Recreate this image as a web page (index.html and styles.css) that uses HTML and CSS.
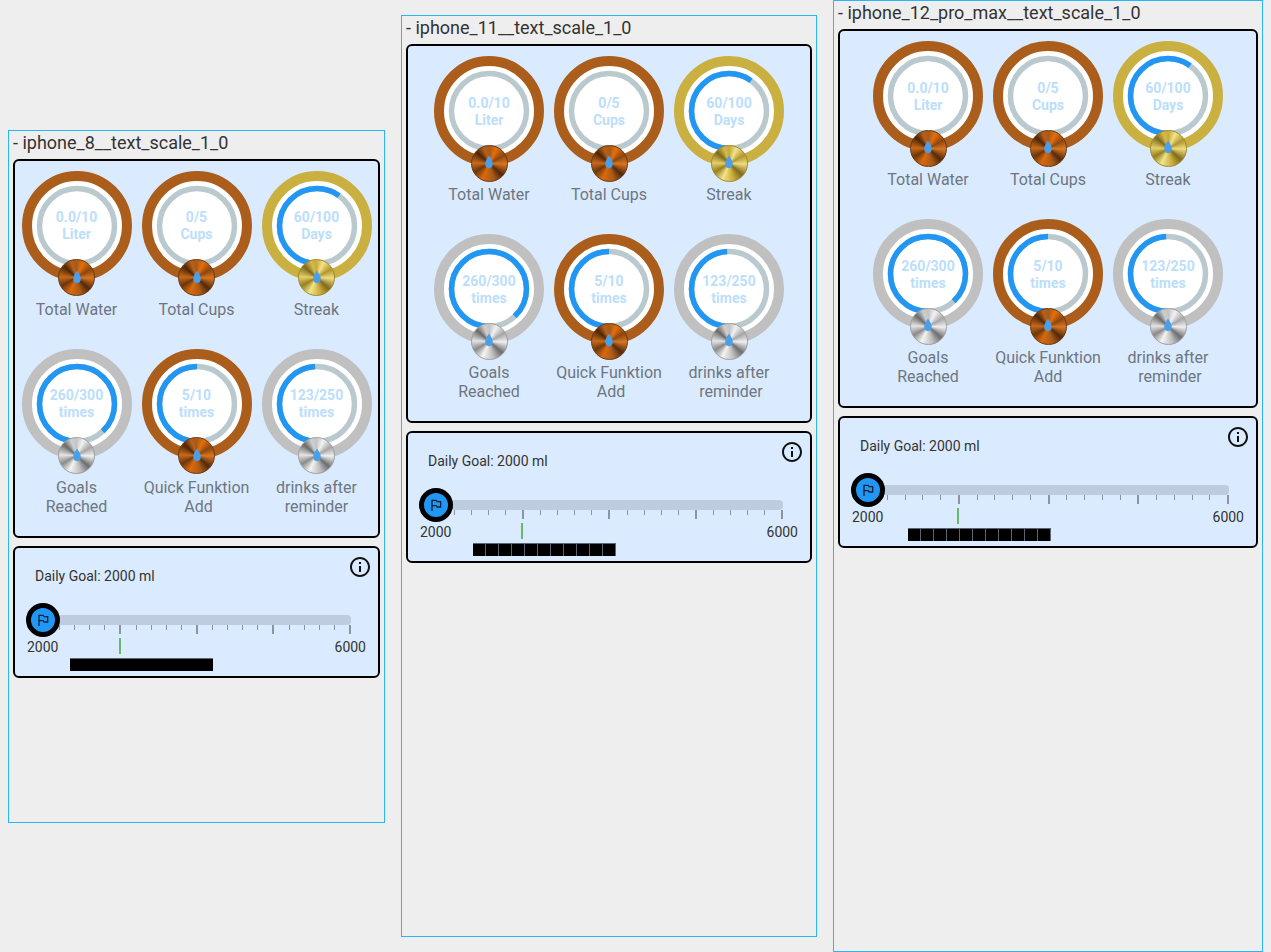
FILE: index.html
```html
<!DOCTYPE html>
<html lang="en">
<head>
<meta charset="utf-8">
<title>Golden screens</title>
<link rel="stylesheet" href="styles.css">
</head>
<body>
<svg class="defs" width="0" height="0" aria-hidden="true">
  <symbol id="drop" viewBox="0 0 24 24"><path d="M12 1C8.5 6.5 5.5 10.5 5.5 15a6.5 7.5 0 0 0 13 0C18.5 10.5 15.5 6.5 12 1z"/></symbol>
  <symbol id="flag" viewBox="0 0 24 24"><path d="M14 6l-1-2H5v17h2v-7h5l1 2h7V6h-6zm4 8h-4l-1-2H7V6h5l1 2h5v6z"/></symbol>
  <symbol id="info" viewBox="0 0 24 24"><path d="M11 7h2v2h-2zm0 4h2v6h-2zm1-9C6.48 2 2 6.48 2 12s4.48 10 10 10 10-4.48 10-10S17.52 2 12 2zm0 18c-4.41 0-8-3.59-8-8s3.59-8 8-8 8 3.59 8 8-3.59 8-8 8z"/></symbol>
</svg>

<section class="frame frame-8">
  <h2 class="frame-title">- iphone_8__text_scale_1_0</h2>
  <div class="card gauges">
    <div class="gauge bronze"><div class="dial"><svg class="ring" viewBox="0 0 110 110"><circle class="rim" cx="55" cy="55" r="50"/><circle class="base" cx="55" cy="55" r="37.5"/></svg><div class="value">0.0/10<br>Liter</div><div class="bead"><svg class="drop"><use href="#drop"/></svg></div></div><div class="label">Total Water</div></div>
    <div class="gauge bronze"><div class="dial"><svg class="ring" viewBox="0 0 110 110"><circle class="rim" cx="55" cy="55" r="50"/><circle class="base" cx="55" cy="55" r="37.5"/></svg><div class="value">0/5<br>Cups</div><div class="bead"><svg class="drop"><use href="#drop"/></svg></div></div><div class="label">Total Cups</div></div>
    <div class="gauge gold"><div class="dial"><svg class="ring" viewBox="0 0 110 110"><circle class="rim" cx="55" cy="55" r="50"/><circle class="base" cx="55" cy="55" r="37.5"/><circle class="arc" cx="55" cy="55" r="37.5" pathLength="100" stroke-dasharray="60 100" transform="rotate(90 55 55)"/></svg><div class="value">60/100<br>Days</div><div class="bead"><svg class="drop"><use href="#drop"/></svg></div></div><div class="label">Streak</div></div>
    <div class="gauge silver"><div class="dial"><svg class="ring" viewBox="0 0 110 110"><circle class="rim" cx="55" cy="55" r="50"/><circle class="base" cx="55" cy="55" r="37.5"/><circle class="arc" cx="55" cy="55" r="37.5" pathLength="100" stroke-dasharray="88 100" transform="rotate(90 55 55)"/></svg><div class="value">260/300<br>times</div><div class="bead"><svg class="drop"><use href="#drop"/></svg></div></div><div class="label">Goals<br>Reached</div></div>
    <div class="gauge bronze"><div class="dial"><svg class="ring" viewBox="0 0 110 110"><circle class="rim" cx="55" cy="55" r="50"/><circle class="base" cx="55" cy="55" r="37.5"/><circle class="arc" cx="55" cy="55" r="37.5" pathLength="100" stroke-dasharray="50 100" transform="rotate(90 55 55)"/></svg><div class="value">5/10<br>times</div><div class="bead"><svg class="drop"><use href="#drop"/></svg></div></div><div class="label">Quick Funktion<br><span class="nudge">Add</span></div></div>
    <div class="gauge silver"><div class="dial"><svg class="ring" viewBox="0 0 110 110"><circle class="rim" cx="55" cy="55" r="50"/><circle class="base" cx="55" cy="55" r="37.5"/><circle class="arc" cx="55" cy="55" r="37.5" pathLength="100" stroke-dasharray="49.2 100" transform="rotate(90 55 55)"/></svg><div class="value">123/250<br>times</div><div class="bead"><svg class="drop"><use href="#drop"/></svg></div></div><div class="label">drinks after<br>reminder</div></div>
  </div>
  <div class="card goal">
    <div class="goal-text">Daily Goal: 2000 ml</div>
    <svg class="info"><use href="#info"/></svg>
    <div class="slider">
      <div class="track"></div>
      <div class="ticks"><b></b><i></i><i></i><i></i><i></i><b></b><i></i><i></i><i></i><i></i><b></b><i></i><i></i><i></i><i></i><b></b><i></i><i></i><i></i><i></i><b></b></div>
      <div class="range"><span>2000</span><span>6000</span></div>
      <div class="bar solid"></div>
      <div class="marker"></div>
      <div class="thumb"><svg class="flag"><use href="#flag"/></svg></div>
    </div>
  </div>
</section>

<section class="frame frame-11">
  <h2 class="frame-title">- iphone_11__text_scale_1_0</h2>
  <div class="card gauges">
    <div class="gauge bronze"><div class="dial"><svg class="ring" viewBox="0 0 110 110"><circle class="rim" cx="55" cy="55" r="50"/><circle class="base" cx="55" cy="55" r="37.5"/></svg><div class="value">0.0/10<br>Liter</div><div class="bead"><svg class="drop"><use href="#drop"/></svg></div></div><div class="label">Total Water</div></div>
    <div class="gauge bronze"><div class="dial"><svg class="ring" viewBox="0 0 110 110"><circle class="rim" cx="55" cy="55" r="50"/><circle class="base" cx="55" cy="55" r="37.5"/></svg><div class="value">0/5<br>Cups</div><div class="bead"><svg class="drop"><use href="#drop"/></svg></div></div><div class="label">Total Cups</div></div>
    <div class="gauge gold"><div class="dial"><svg class="ring" viewBox="0 0 110 110"><circle class="rim" cx="55" cy="55" r="50"/><circle class="base" cx="55" cy="55" r="37.5"/><circle class="arc" cx="55" cy="55" r="37.5" pathLength="100" stroke-dasharray="60 100" transform="rotate(90 55 55)"/></svg><div class="value">60/100<br>Days</div><div class="bead"><svg class="drop"><use href="#drop"/></svg></div></div><div class="label">Streak</div></div>
    <div class="gauge silver"><div class="dial"><svg class="ring" viewBox="0 0 110 110"><circle class="rim" cx="55" cy="55" r="50"/><circle class="base" cx="55" cy="55" r="37.5"/><circle class="arc" cx="55" cy="55" r="37.5" pathLength="100" stroke-dasharray="88 100" transform="rotate(90 55 55)"/></svg><div class="value">260/300<br>times</div><div class="bead"><svg class="drop"><use href="#drop"/></svg></div></div><div class="label">Goals<br>Reached</div></div>
    <div class="gauge bronze"><div class="dial"><svg class="ring" viewBox="0 0 110 110"><circle class="rim" cx="55" cy="55" r="50"/><circle class="base" cx="55" cy="55" r="37.5"/><circle class="arc" cx="55" cy="55" r="37.5" pathLength="100" stroke-dasharray="50 100" transform="rotate(90 55 55)"/></svg><div class="value">5/10<br>times</div><div class="bead"><svg class="drop"><use href="#drop"/></svg></div></div><div class="label">Quick Funktion<br><span class="nudge">Add</span></div></div>
    <div class="gauge silver"><div class="dial"><svg class="ring" viewBox="0 0 110 110"><circle class="rim" cx="55" cy="55" r="50"/><circle class="base" cx="55" cy="55" r="37.5"/><circle class="arc" cx="55" cy="55" r="37.5" pathLength="100" stroke-dasharray="49.2 100" transform="rotate(90 55 55)"/></svg><div class="value">123/250<br>times</div><div class="bead"><svg class="drop"><use href="#drop"/></svg></div></div><div class="label">drinks after<br><span class="nudge">reminder</span></div></div>
  </div>
  <div class="card goal">
    <div class="goal-text">Daily Goal: 2000 ml</div>
    <svg class="info"><use href="#info"/></svg>
    <div class="slider">
      <div class="track"></div>
      <div class="ticks"><b></b><i></i><i></i><i></i><i></i><b></b><i></i><i></i><i></i><i></i><b></b><i></i><i></i><i></i><i></i><b></b><i></i><i></i><i></i><i></i><b></b></div>
      <div class="range"><span>2000</span><span>6000</span></div>
      <div class="bar"></div>
      <div class="marker"></div>
      <div class="thumb"><svg class="flag"><use href="#flag"/></svg></div>
    </div>
  </div>
</section>

<section class="frame frame-12">
  <h2 class="frame-title">- iphone_12_pro_max__text_scale_1_0</h2>
  <div class="card gauges">
    <div class="gauge bronze"><div class="dial"><svg class="ring" viewBox="0 0 110 110"><circle class="rim" cx="55" cy="55" r="50"/><circle class="base" cx="55" cy="55" r="37.5"/></svg><div class="value">0.0/10<br>Liter</div><div class="bead"><svg class="drop"><use href="#drop"/></svg></div></div><div class="label">Total Water</div></div>
    <div class="gauge bronze"><div class="dial"><svg class="ring" viewBox="0 0 110 110"><circle class="rim" cx="55" cy="55" r="50"/><circle class="base" cx="55" cy="55" r="37.5"/></svg><div class="value">0/5<br>Cups</div><div class="bead"><svg class="drop"><use href="#drop"/></svg></div></div><div class="label">Total Cups</div></div>
    <div class="gauge gold"><div class="dial"><svg class="ring" viewBox="0 0 110 110"><circle class="rim" cx="55" cy="55" r="50"/><circle class="base" cx="55" cy="55" r="37.5"/><circle class="arc" cx="55" cy="55" r="37.5" pathLength="100" stroke-dasharray="60 100" transform="rotate(90 55 55)"/></svg><div class="value">60/100<br>Days</div><div class="bead"><svg class="drop"><use href="#drop"/></svg></div></div><div class="label">Streak</div></div>
    <div class="gauge silver"><div class="dial"><svg class="ring" viewBox="0 0 110 110"><circle class="rim" cx="55" cy="55" r="50"/><circle class="base" cx="55" cy="55" r="37.5"/><circle class="arc" cx="55" cy="55" r="37.5" pathLength="100" stroke-dasharray="88 100" transform="rotate(90 55 55)"/></svg><div class="value">260/300<br>times</div><div class="bead"><svg class="drop"><use href="#drop"/></svg></div></div><div class="label">Goals<br>Reached</div></div>
    <div class="gauge bronze"><div class="dial"><svg class="ring" viewBox="0 0 110 110"><circle class="rim" cx="55" cy="55" r="50"/><circle class="base" cx="55" cy="55" r="37.5"/><circle class="arc" cx="55" cy="55" r="37.5" pathLength="100" stroke-dasharray="50 100" transform="rotate(90 55 55)"/></svg><div class="value">5/10<br>times</div><div class="bead"><svg class="drop"><use href="#drop"/></svg></div></div><div class="label">Quick Funktion<br>Add</div></div>
    <div class="gauge silver"><div class="dial"><svg class="ring" viewBox="0 0 110 110"><circle class="rim" cx="55" cy="55" r="50"/><circle class="base" cx="55" cy="55" r="37.5"/><circle class="arc" cx="55" cy="55" r="37.5" pathLength="100" stroke-dasharray="49.2 100" transform="rotate(90 55 55)"/></svg><div class="value">123/250<br>times</div><div class="bead"><svg class="drop"><use href="#drop"/></svg></div></div><div class="label">drinks after<br><span class="nudge">reminder</span></div></div>
  </div>
  <div class="card goal">
    <div class="goal-text">Daily Goal: 2000 ml</div>
    <svg class="info"><use href="#info"/></svg>
    <div class="slider">
      <div class="track"></div>
      <div class="ticks"><b></b><i></i><i></i><i></i><i></i><b></b><i></i><i></i><i></i><i></i><b></b><i></i><i></i><i></i><i></i><b></b><i></i><i></i><i></i><i></i><b></b></div>
      <div class="range"><span>2000</span><span>6000</span></div>
      <div class="bar"></div>
      <div class="marker"></div>
      <div class="thumb"><svg class="flag"><use href="#flag"/></svg></div>
    </div>
  </div>
</section>
</body>
</html>
```

FILE: styles.css
```css
* { box-sizing: border-box; }

html, body { margin: 0; height: 100%; }

body {
  height: 952px;
  padding-left: 8px;
  display: flex;
  align-items: center;
  gap: 16px;
  overflow: hidden;
  background: #eeeeee;
  font-family: Roboto, "Liberation Sans", sans-serif;
  color: #222;
}

.defs { position: absolute; }

.frame {
  flex: none;
  border: 1px solid #29b6f6;
  padding: 0 4px;
}
.frame-8 { width: 377px; height: 693px; }
.frame-11 { width: 416px; height: 922px; }
.frame-12 { width: 430px; height: 952px; }

.frame-title {
  margin: 0 0 4px;
  height: 24px;
  font-size: 18px;
  font-weight: 400;
  line-height: 24px;
  color: #333;
  white-space: nowrap;
}

.card {
  border: 2px solid #000;
  border-radius: 6px;
  background: #dbebff;
}

.gauges {
  display: grid;
  grid-template-columns: repeat(3, 110px);
  justify-content: center;
  column-gap: 10px;
  row-gap: 10px;
  padding: 10px 0 19px;
  margin-bottom: 8px;
}

.gauge { height: 168px; }

.dial { position: relative; width: 110px; height: 110px; }

.ring { display: block; width: 110px; height: 110px; }
.rim { fill: #fff; stroke-width: 10; }
.base { fill: none; stroke: #b9c9ce; stroke-width: 5.5; }
.arc { fill: none; stroke: #2196f3; stroke-width: 5.5; }

.bronze .rim { stroke: #ab5e1b; }
.gold .rim { stroke: #c9b040; }
.silver .rim { stroke: #c0c0c0; }

.value {
  position: absolute;
  inset: 0;
  padding-top: 38.5px;
  text-align: center;
  font-size: 14px;
  font-weight: 700;
  line-height: 17px;
  color: #bbdefb;
}

.bead {
  position: absolute;
  left: 36.5px;
  top: 88.5px;
  width: 37px;
  height: 37px;
  padding-bottom: 2px;
  border-radius: 50%;
  display: flex;
  align-items: center;
  justify-content: center;
}
.bronze .bead {
  border: 1px solid #6a3a12;
  background: conic-gradient(#a85a18, #e46f0a 25deg, #8a4610 60deg, #d9761f 92deg, #54290a 132deg, #a85a18 165deg, #d9690c 205deg, #6e360a 240deg, #c9691a 272deg, #4d2607 312deg, #b8601a 340deg, #a85a18);
}
.gold .bead {
  border: 1px solid #a08a30;
  background: conic-gradient(#c9ab3a, #f3e38a 25deg, #b29630 60deg, #f0dc80 92deg, #806a1c 132deg, #c9ab3a 165deg, #f3e38a 205deg, #96801f 240deg, #e6d06a 272deg, #7e6a1c 312deg, #d4bb4c 340deg, #c9ab3a);
}
.silver .bead {
  border: 1px solid #a0a0a0;
  background: conic-gradient(#c4c4c4, #f2f2f2 25deg, #a6a6a6 60deg, #f0f0f0 92deg, #6e6e6e 132deg, #bdbdbd 165deg, #f4f4f4 205deg, #8a8a8a 240deg, #e4e4e4 272deg, #6a6a6a 312deg, #cfcfcf 340deg, #c4c4c4);
}

.drop { width: 14px; height: 14px; fill: #4a9fe8; }

.label {
  margin-top: 19px;
  margin-left: -10px;
  margin-right: -10px;
  text-align: center;
  font-size: 16px;
  line-height: 19px;
  color: #6d7681;
}
.nudge { margin-left: 4px; }

.goal {
  position: relative;
  height: 132px;
  padding-top: 20px;
}
.goal-text {
  padding-left: 20px;
  font-size: 14px;
  line-height: 16px;
  color: #333;
}
.info {
  position: absolute;
  top: 7px;
  right: 6px;
  width: 24px;
  height: 24px;
  fill: #111;
}

.slider {
  position: relative;
  margin: 31px 28px 0;
}
.track {
  height: 10px;
  margin-right: -1px;
  background: #bdcddf;
  border-radius: 0 4px 4px 0;
}
.ticks {
  display: flex;
  justify-content: space-between;
  height: 9px;
  margin-right: -1px;
}
.ticks i, .ticks b { display: block; background: #8b95a0; }
.ticks i { width: 1px; height: 5px; }
.ticks b { width: 2px; height: 9px; }

.range {
  display: flex;
  justify-content: space-between;
  margin: 5px -16px 0;
  font-size: 14px;
  line-height: 16px;
  color: #333;
}
.bar {
  width: 143px;
  height: 13px;
  margin-top: 3px;
  margin-left: calc(25% - 50px);
  background: repeating-linear-gradient(90deg, #000 0 12px, #5b6470 12px 13px);
  border-top: 1px solid #5b6470;
}
.bar.solid { background: #000; }

.marker {
  position: absolute;
  top: 23px;
  left: calc(25% - 1.25px);
  width: 2px;
  height: 16px;
  background: #66bb6a;
}
.thumb {
  position: absolute;
  left: -17px;
  top: -12px;
  width: 34px;
  height: 34px;
  border: 5px solid #000;
  border-radius: 50%;
  background: #2196f3;
  display: flex;
  align-items: center;
  justify-content: center;
}
.flag { width: 16px; height: 16px; fill: #10253d; }
```
